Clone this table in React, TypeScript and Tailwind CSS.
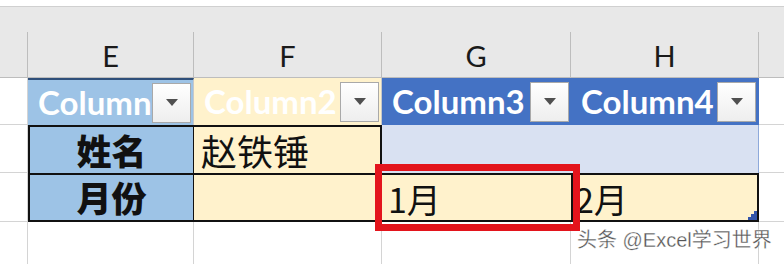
const cols = ['E', 'F', 'G', 'H'];

function Dropdown() {
  return (
    <div className="flex h-[40px] w-[39px] shrink-0 items-center justify-center border border-[#a9a9a9] bg-gradient-to-b from-white to-[#eeeeee]">
      <svg width="12" height="7" viewBox="0 0 12 7">
        <path d="M0 0 L12 0 L6 7 Z" fill="#505050" />
      </svg>
    </div>
  );
}

function HeadCell({ label, bg, border }: { label: string; bg: string; border: string }) {
  return (
    <div className={`flex items-center pl-[10px] pr-[2px] ${bg} ${border}`}>
      <span className="min-w-0 flex-1 overflow-hidden whitespace-nowrap text-[33px] font-bold leading-normal text-white" style={{ fontFamily: 'Lato, "Open Sans", sans-serif' }}>
        {label}
      </span>
      <Dropdown />
    </div>
  );
}

const cjk = { fontFamily: '"Noto Sans CJK SC", sans-serif' };

export default function App() {
  return (
    <div className="relative h-[264px] w-[784px] overflow-hidden bg-white" style={{ fontFamily: 'Lato, "Noto Sans CJK SC", sans-serif' }}>
      {/* top strip */}
      <div className="h-[7px] border-b border-[#d0d0d0] bg-white" />
      <div className="h-[25px] bg-[#e8e8e8]" />

      <div className="grid h-[232px] grid-cols-[28px_166px_188px_189px_188px_1fr] grid-rows-[46px_47px_48px_49px_1fr]">
        {/* column letters */}
        <div className="border-r border-b border-[#bdbdbd] bg-[#e8e8e8]" />
        {cols.map((c) => (
          <div key={c} className="flex items-center justify-center border-r border-b border-[#bdbdbd] bg-[#e8e8e8] pt-[3px] text-[29px] text-[#1a1a1a]">
            {c}
          </div>
        ))}
        <div className="border-b border-[#bdbdbd] bg-[#e8e8e8]" />

        {/* table header row */}
        <div className="border-r border-b border-[#d4d4d4]" />
        <HeadCell label="Column1" bg="bg-[#9dc3e6]" border="border-t-2 border-t-[#2f4f7a] border-r border-r-[#c8c8c8]" />
        <HeadCell label="Column2" bg="bg-[#fff2cc]" border="border-r border-r-[#c8c8c8]" />
        <HeadCell label="Column3" bg="bg-[#4472c4]" border="" />
        <HeadCell label="Column4" bg="bg-[#4472c4]" border="border-r border-r-[#4472c4]" />
        <div className="border-b border-[#d4d4d4]" />

        {/* row 2 */}
        <div className="border-r border-b border-[#d4d4d4]" />
        <div className="flex items-center justify-center border-2 border-r border-b-0 border-[#111] bg-[#9dc3e6] text-[35px] font-black text-[#111]" style={cjk}>
          姓名
        </div>
        <div className="flex items-center border-t-2 border-r-2 border-[#111] bg-[#fff2cc] pl-[7px] text-[36px] text-[#111]" style={cjk}>
          赵铁锤
        </div>
        <div className="col-span-2 border-r border-r-[#8ea9db] bg-[#d9e1f2]" />
        <div className="border-b border-[#d4d4d4]" />

        {/* row 3 */}
        <div className="border-r border-b border-[#d4d4d4]" />
        <div className="flex items-center justify-center border-2 border-r border-[#111] bg-[#9dc3e6] text-[35px] font-black text-[#111]" style={cjk}>
          月份
        </div>
        <div className="border-y-2 border-r-2 border-[#111] bg-[#fff2cc]" />
        <div className="flex items-center border-y-2 border-[#111] bg-[#fff2cc] pl-[6px] pt-[2px] text-[34px] text-[#111]" style={cjk}>
          1月
        </div>
        <div className="relative flex items-center border-2 border-[#111] bg-[#fff2cc] pl-[2px] pt-[2px] text-[34px] text-[#111]" style={cjk}>
          2月
          <svg className="absolute bottom-0 right-0" width="9" height="9" viewBox="0 0 9 9">
            <path d="M9 0 V9 H0 V6 H3 V3 H6 V0 Z" fill="#3355aa" />
          </svg>
        </div>
        <div className="border-b border-[#d4d4d4]" />

        {/* row 4 */}
        <div className="border-r border-[#d4d4d4]" />
        <div className="border-r border-[#d4d4d4]" />
        <div className="border-r border-[#d4d4d4]" />
        <div className="border-r border-[#d4d4d4]" />
        <div className="border-r border-[#d4d4d4]" />
        <div />
      </div>

      {/* red highlight box */}
      <div className="absolute left-[375px] top-[164px] h-[67px] w-[205px] border-[7px] border-[#e3141c]" />

      {/* watermark */}
      <div
        className="absolute left-[577px] top-[230px] whitespace-nowrap text-[20px] leading-none text-[#555]"
        style={{ fontFamily: '"Liberation Sans", "Noto Sans CJK SC", sans-serif', WebkitTextStroke: '0.3px #ffffff' }}
      >
        头条 @Excel学习世界
      </div>
    </div>
  );
}
